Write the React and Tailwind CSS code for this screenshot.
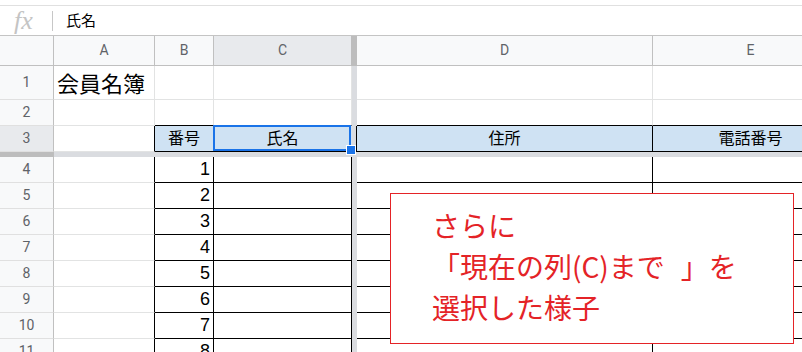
import React from "react";

const R = {
  g: "border-r border-r-[#e2e3e3]",
  k: "border-r border-r-black",
  h: "border-r border-r-[#c0c0c0]",
  n: "",
};
const B = {
  g: "border-b border-b-[#e2e3e3]",
  k: "border-b border-b-black",
  h: "border-b border-b-[#e0e0e0]",
  hh: "border-b border-b-[#c0c0c0]",
  n: "",
};

function C({ w, r = "g", b = "g", bg = "", cls = "", children }) {
  return (
    <div className={`${w} h-full shrink-0 ${R[r]} ${B[b]} ${bg} ${cls}`}>
      {children}
    </div>
  );
}

function RowHead({ n, sel }) {
  return (
    <C
      w="w-[54px]"
      r="h"
      b="h"
      bg={sel ? "bg-[#e8eaed]" : "bg-[#f8f9fa]"}
      cls="flex items-center justify-center font-['Roboto',sans-serif] text-[14px] text-[#5f6368]"
    >
      {n}
    </C>
  );
}

function Freeze({ edge }) {
  return (
    <div
      className={`w-[5px] h-full shrink-0 bg-[#dadce0] ${
        edge ? "border-r border-r-black" : ""
      }`}
    />
  );
}

function DataRow({ n, v }) {
  return (
    <div className="flex h-[26px]">
      <RowHead n={n} />
      <C w="w-[101px]" r="k" b="g" />
      <C
        w="w-[59px]"
        r="k"
        b="k"
        cls="flex items-center justify-end pr-[3px] text-[18px] text-black font-['Liberation_Sans',sans-serif]"
      >
        {v}
      </C>
      <C w="w-[138px]" r="k" b="k" />
      <Freeze />
      <C w="w-[296px]" r="k" b="k" />
      <C w="w-[196px]" r="k" b="k" />
    </div>
  );
}

export default function App() {
  const head =
    "flex items-center justify-center font-['Roboto',sans-serif] text-[14px] text-[#5f6368]";
  const hdrCell = "flex items-center justify-center text-[16px] text-black";
  return (
    <div className="relative w-[802px] h-[352px] overflow-hidden bg-white font-['Liberation_Sans','Noto_Sans_CJK_JP',sans-serif]">
      {/* formula bar */}
      <div className="mt-[5px] h-[31px] border-t border-t-[#e0e0e0] border-b border-b-[#c4c4c4] flex items-center">
        <div className="w-[52px] h-full flex items-center justify-center pr-[5px]">
          <span className="font-['Liberation_Serif',serif] italic text-[26px] leading-none text-[#c4c4c4]">
            fx
          </span>
        </div>
        <div className="w-px h-[20px] bg-[#c7c7c7]" />
        <div className="ml-[13px] text-[15px] text-black font-['Noto_Sans_CJK_JP',sans-serif]">
          氏名
        </div>
      </div>

      {/* column header */}
      <div className="flex h-[30px]">
        <C w="w-[54px]" r="h" b="hh" bg="bg-[#f8f9fa]" />
        <C w="w-[101px]" r="h" b="hh" bg="bg-[#f8f9fa]" cls={head}>
          A
        </C>
        <C w="w-[59px]" r="h" b="hh" bg="bg-[#f8f9fa]" cls={head}>
          B
        </C>
        <C w="w-[137px]" r="n" b="hh" bg="bg-[#e8eaed]" cls={head}>
          C
        </C>
        <div className="w-[6px] h-full shrink-0 bg-[#bdbdbd]" />
        <C w="w-[296px]" r="h" b="hh" bg="bg-[#f8f9fa]" cls={head}>
          D
        </C>
        <C w="w-[196px]" r="h" b="hh" bg="bg-[#f8f9fa]" cls={head}>
          E
        </C>
      </div>

      {/* row 1 */}
      <div className="flex h-[34px]">
        <RowHead n={1} />
        <C
          w="w-[101px]"
          cls="flex items-center pl-[3px] text-[22px] text-black whitespace-nowrap overflow-visible font-['Noto_Sans_CJK_JP',sans-serif]"
        >
          会員名簿
        </C>
        <C w="w-[59px]" />
        <C w="w-[138px]" />
        <Freeze />
        <C w="w-[296px]" />
        <C w="w-[196px]" />
      </div>

      {/* row 2 */}
      <div className="flex h-[26px]">
        <RowHead n={2} />
        <C w="w-[101px]" />
        <C w="w-[59px]" b="k" />
        <C w="w-[138px]" b="k" />
        <Freeze />
        <C w="w-[296px]" b="k" />
        <C w="w-[196px]" b="k" />
      </div>

      {/* row 3 */}
      <div className="flex h-[26px]">
        <RowHead n={3} sel />
        <C w="w-[101px]" r="k" b="g" />
        <C w="w-[59px]" r="k" b="k" bg="bg-[#cfe2f3]" cls={hdrCell}>
          番号
        </C>
        <C
          w="w-[138px]"
          r="n"
          b="k"
          bg="bg-[#cfe2f3]"
          cls={`${hdrCell} relative pr-px`}
        >
          氏名
          <div className="absolute -left-px -top-px w-[138px] h-[26px] border-2 border-[#1a73e8]" />
          <div className="absolute left-[132px] top-[19px] w-[10px] h-[10px] bg-[#1a73e8] border border-white z-10" />
        </C>
        <Freeze edge />
        <C w="w-[296px]" r="k" b="k" bg="bg-[#cfe2f3]" cls={hdrCell}>
          住所
        </C>
        <C w="w-[196px]" r="k" b="k" bg="bg-[#cfe2f3]" cls={hdrCell}>
          電話番号
        </C>
      </div>

      {/* horizontal freeze bar */}
      <div className="flex h-[5px]">
        <div className="w-[54px] h-full bg-[#bdbdbd]" />
        <div className="flex-1 h-full bg-[#dadce0]" />
      </div>

      {[1, 2, 3, 4, 5, 6, 7, 8].map((v, i) => (
        <DataRow key={v} n={i + 4} v={v} />
      ))}

      {/* callout */}
      <div className="absolute left-[390px] top-[193px] w-[404px] h-[151px] border border-[#e42327] bg-white pl-[41px] pt-[11px] text-[28px] leading-[41px] text-[#e42327] whitespace-nowrap font-['Noto_Sans_CJK_JP',sans-serif]">
        <div>さらに</div>
        <div>
          「現在の列(C)まで<span className="ml-[16px]">」を</span>
        </div>
        <div>選択した様子</div>
      </div>
    </div>
  );
}
